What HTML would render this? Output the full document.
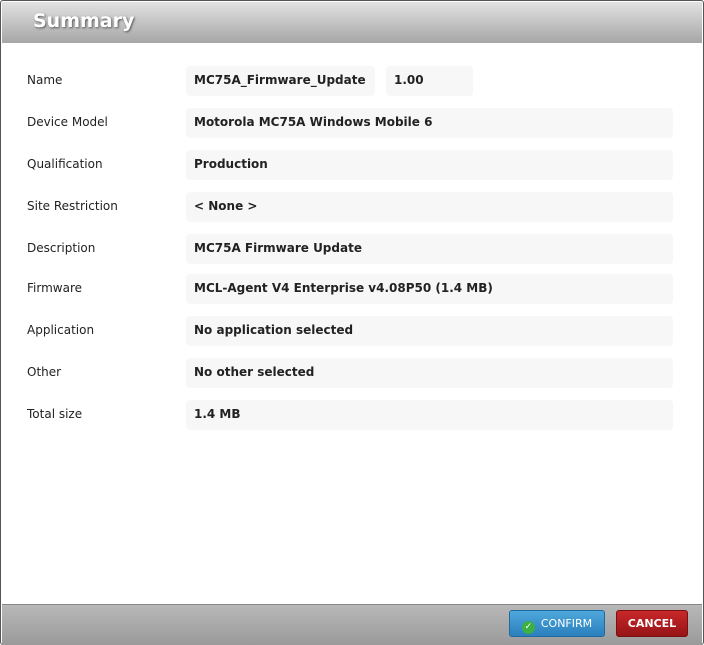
<html><head><style>
body{margin:0;width:704px;height:645px;background:#fff;font-family:"DejaVu Sans",Verdana,sans-serif;position:relative;overflow:hidden}
.frame{position:absolute;left:0;top:0;width:702px;height:643px;border:1px solid #555;border-radius:3px;background:#fff}
.hd{position:absolute;left:1px;top:1px;right:1px;height:41px;background:linear-gradient(#e2e2e2,#a6a6a6);}
.hd span{position:absolute;left:31px;top:8px;font:bold 19px "DejaVu Sans",sans-serif;color:#fff;text-shadow:1px 1px 2px #555}
.ft{position:absolute;left:1px;right:1px;top:603px;height:40px;background:linear-gradient(#b8b8b8,#9a9a9a);border-top:1px solid #888}
.lb{position:absolute;left:27px;font-size:12px;color:#222}
.v{position:absolute;left:186px;width:487px;height:30px;background:#f7f7f7;border-radius:4px;font-size:12px;font-weight:bold;color:#222;line-height:28px;padding-left:8px;box-sizing:border-box}
.btn{position:absolute;top:610px;height:27px;border-radius:3px;color:#fff;font-size:11px;line-height:25px;text-align:center}
</style></head><body>
<div class="frame">
<div class="hd"><span>Summary</span></div>
<div class="ft"></div>
</div>
<div class="lb" style="top:73px">Name</div>
<div class="v" style="top:66px;width:189px">MC75A_Firmware_Update</div>
<div class="v" style="top:66px;left:386px;width:87px">1.00</div>
<div class="lb" style="top:115px">Device Model</div><div class="v" style="top:108px">Motorola MC75A Windows Mobile 6</div>
<div class="lb" style="top:157px">Qualification</div><div class="v" style="top:150px">Production</div>
<div class="lb" style="top:199px">Site Restriction</div><div class="v" style="top:192px">&lt; None &gt;</div>
<div class="lb" style="top:241px">Description</div><div class="v" style="top:234px">MC75A Firmware Update</div>
<div class="lb" style="top:281px">Firmware</div><div class="v" style="top:274px">MCL-Agent V4 Enterprise v4.08P50 (1.4 MB)</div>
<div class="lb" style="top:323px">Application</div><div class="v" style="top:316px">No application selected</div>
<div class="lb" style="top:365px">Other</div><div class="v" style="top:358px">No other selected</div>
<div class="lb" style="top:407px">Total size</div><div class="v" style="top:400px">1.4 MB</div>
<div class="btn" style="left:509px;width:96px;background:linear-gradient(#4fa8dc,#2a7fbd);border:1px solid #1f6aa0;box-sizing:border-box"><span style="display:inline-block;width:13px;height:13px;border-radius:50%;background:#3cb043;color:#fff;font-size:9px;line-height:13px;vertical-align:-2px;margin-right:6px">✓</span>CONFIRM</div>
<div class="btn" style="left:616px;width:72px;background:linear-gradient(#c8282a,#961416);border:1px solid #7a1012;box-sizing:border-box;font-weight:bold">CANCEL</div>
</body></html>
